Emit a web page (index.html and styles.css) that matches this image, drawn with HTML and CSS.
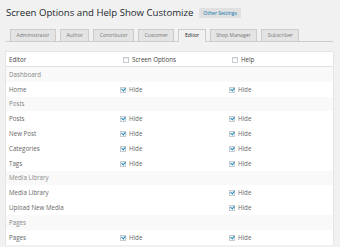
FILE: index.html
```html
<!DOCTYPE html>
<html lang="en">
<head>
    <meta charset="UTF-8">
    <meta name="viewport" content="width=device-width, initial-scale=1.0">
    <title>Screen Options and Help Show Customize</title>
    <link rel="stylesheet" href="styles.css">
</head>
<body>
    <div class="wrap">
        <div class="title-bar">
            <h1>Screen Options and Help Show Customize</h1>
            <a class="title-btn" href="#">Other Settings</a>
        </div>

        <nav class="tabs">
            <a class="tab" href="#">Administrator</a>
            <a class="tab" href="#">Author</a>
            <a class="tab" href="#">Contributor</a>
            <a class="tab" href="#">Customer</a>
            <a class="tab active" href="#">Editor</a>
            <a class="tab" href="#">Shop Manager</a>
            <a class="tab" href="#">Subscriber</a>
        </nav>

        <table class="settings">
            <thead>
                <tr>
                    <th>Editor</th>
                    <th><span class="box"></span>Screen Options</th>
                    <th><span class="box"></span>Help</th>
                </tr>
            </thead>
            <tbody>
                <tr class="group"><td colspan="3">Dashboard</td></tr>
                <tr>
                    <td>Home</td>
                    <td><span class="box checked"></span>Hide</td>
                    <td><span class="box checked"></span>Hide</td>
                </tr>
                <tr class="group"><td colspan="3">Posts</td></tr>
                <tr>
                    <td>Posts</td>
                    <td><span class="box checked"></span>Hide</td>
                    <td><span class="box checked"></span>Hide</td>
                </tr>
                <tr>
                    <td>New Post</td>
                    <td><span class="box checked"></span>Hide</td>
                    <td><span class="box checked"></span>Hide</td>
                </tr>
                <tr>
                    <td>Categories</td>
                    <td><span class="box checked"></span>Hide</td>
                    <td><span class="box checked"></span>Hide</td>
                </tr>
                <tr>
                    <td>Tags</td>
                    <td><span class="box checked"></span>Hide</td>
                    <td><span class="box checked"></span>Hide</td>
                </tr>
                <tr class="group"><td colspan="3">Media Library</td></tr>
                <tr>
                    <td>Media Library</td>
                    <td></td>
                    <td><span class="box checked"></span>Hide</td>
                </tr>
                <tr>
                    <td>Upload New Media</td>
                    <td></td>
                    <td><span class="box checked"></span>Hide</td>
                </tr>
                <tr class="group"><td colspan="3">Pages</td></tr>
                <tr>
                    <td>Pages</td>
                    <td><span class="box checked"></span>Hide</td>
                    <td><span class="box checked"></span>Hide</td>
                </tr>
            </tbody>
        </table>
    </div>
</body>
</html>
```

FILE: styles.css
```css
body {
    margin: 0;
    background-color: #f1f1f1;
    font-family: "Open Sans", Arial, sans-serif;
    color: #444;
}

.wrap {
    padding: 5px 7px 0 6px;
}

.title-bar {
    display: flex;
    align-items: center;
    gap: 6px;
    height: 15px;
}

.title-bar h1 {
    margin: 0;
    font-size: 9.6px;
    font-weight: 400;
    color: #23282d;
}

.title-btn {
    display: inline-block;
    padding: 2px 4px;
    background: #e0e0e0;
    color: #0073aa;
    font-size: 5px;
    text-decoration: none;
    border-radius: 1px;
}

.tabs {
    display: flex;
    gap: 4px;
    margin-top: 9px;
    padding-left: 4px;
    border-bottom: 1px solid #ccc;
}

.tab {
    display: block;
    height: 11px;
    line-height: 11px;
    padding: 0 5.5px;
    margin-bottom: -1px;
    border: 1px solid #ccc;
    border-bottom: none;
    background: #e4e4e4;
    color: #777;
    font-size: 5.1px;
    text-decoration: none;
}

.tab.active {
    background: #f1f1f1;
    border-bottom: 1px solid #f1f1f1;
    color: #222;
}

.settings {
    width: 100%;
    margin-top: 10px;
    border-collapse: collapse;
    background: #fff;
    box-shadow: 0 1px 1px rgba(0, 0, 0, 0.04);
    outline: 1px solid #e5e5e5;
    font-size: 6.2px;
}

.settings th,
.settings td {
    height: 14.8px;
    padding: 0 0 0 3px;
    text-align: left;
    font-weight: 400;
    color: #666;
    vertical-align: middle;
}

.settings th {
    height: 14px;
    border-bottom: 1px solid #e1e1e1;
    color: #444;
}

.settings th:first-child,
.settings td:first-child {
    width: 108px;
}

.settings th:nth-child(2),
.settings td:nth-child(2) {
    width: 103px;
}

.settings th:nth-child(n+2) {
    padding-left: 6px;
}

.settings .group td {
    background: #f9f9f9;
    color: #888;
}

.box {
    display: inline-block;
    width: 4px;
    height: 4px;
    margin-right: 3px;
    vertical-align: -1px;
    border: 1px solid #c8ccd0;
    background: #fff;
    box-shadow: inset 0 1px 1px rgba(0, 0, 0, 0.08);
    position: relative;
}

.box.checked::after {
    content: "";
    position: absolute;
    left: 1px;
    top: -1px;
    width: 2px;
    height: 3px;
    border: solid #1e8cbe;
    border-width: 0 1px 1px 0;
    transform: rotate(40deg);
}
```
